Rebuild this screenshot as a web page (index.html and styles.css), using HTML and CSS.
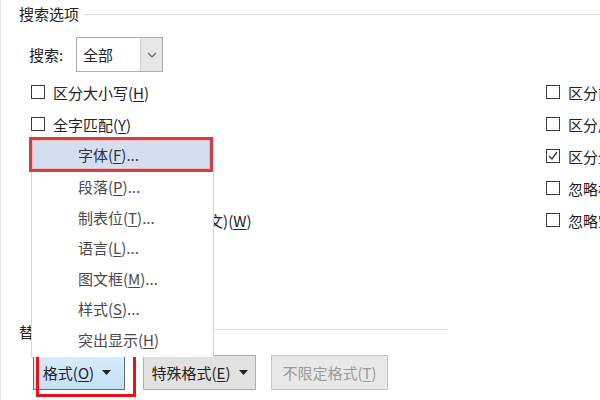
FILE: index.html
```html
<!DOCTYPE html>
<html lang="zh-CN">
<head>
  <meta charset="UTF-8" />
  <title>查找和替换</title>
  <link rel="stylesheet" href="styles.css">
</head>
<body>
  <div class="dialog">
    <div class="group-title">
      <span>搜索选项</span>
      <i class="rule"></i>
    </div>

    <div class="search-row">
      <span class="label">搜索:</span>
      <div class="select">
        <span class="value">全部</span>
        <span class="arrow">
          <svg width="10" height="6" viewBox="0 0 10 6"><path d="M1 1 L5 5 L9 1" fill="none" stroke="#666" stroke-width="1.2"/></svg>
        </span>
      </div>
    </div>

    <div class="options">
      <ul class="col">
        <li><i class="box"></i><span>区分大小写(<u>H</u>)</span></li>
        <li><i class="box"></i><span>全字匹配(<u>Y</u>)</span></li>
        <!-- these two sit fully under the open menu -->
        <li class="covered"><i class="box"></i><span>使用通配符(<u>U</u>)</span></li>
        <li class="covered"><i class="box"></i><span>同音(英文)(<u>K</u>)</span></li>
        <li><i class="box"></i><span>查找单词的所有形式(英文)(<u>W</u>)</span></li>
      </ul>
      <ul class="col">
        <li><i class="box"></i><span>区分前缀(<u>X</u>)</span></li>
        <li><i class="box"></i><span>区分后缀(<u>T</u>)</span></li>
        <li><i class="box"><svg width="12" height="12" viewBox="0 0 12 12"><path d="M2 6 L5 9 L10 2" fill="none" stroke="#333" stroke-width="1.3"/></svg></i><span>区分全/半角(<u>M</u>)</span></li>
        <li><i class="box"></i><span>忽略标点符号(<u>S</u>)</span></li>
        <li><i class="box"></i><span>忽略空格(<u>W</u>)</span></li>
      </ul>
    </div>

    <div class="group-title replace">
      <span>替换</span>
      <i class="rule"></i>
    </div>

    <div class="buttons">
      <button class="btn active"><span>格式(<u>O</u>)</span><svg class="caret" width="9" height="5" viewBox="0 0 9 5"><path d="M0 0 H9 L4.5 5 Z" fill="#222"/></svg></button>
      <button class="btn wide"><span>特殊格式(<u>E</u>)</span><svg class="caret" width="9" height="5" viewBox="0 0 9 5"><path d="M0 0 H9 L4.5 5 Z" fill="#222"/></svg></button>
      <button class="btn disabled"><span>不限定格式(<u>T</u>)</span></button>
      <span class="mark-button"></span>
    </div>

    <ul class="menu">
      <li class="selected">字体(<u>F</u>)...</li>
      <li>段落(<u>P</u>)...</li>
      <li>制表位(<u>T</u>)...</li>
      <li>语言(<u>L</u>)...</li>
      <li>图文框(<u>M</u>)...</li>
      <li>样式(<u>S</u>)...</li>
      <li>突出显示(<u>H</u>)</li>
    </ul>
  </div>
</body>
</html>
```

FILE: styles.css
```css
body {
  margin: 0;
  background: #fff;
  font-family: "Noto Sans CJK SC", "Microsoft YaHei", sans-serif;
  font-size: 15px;
  color: #222;
  overflow: hidden;
}
.dialog {
  position: relative;
  width: 600px;
  height: 400px;
  box-sizing: border-box;
  padding: 4px 0 0 18px;
  border-left: 1px solid #e4e4e4;
  white-space: nowrap;
  overflow: hidden;
}
u {
  text-decoration: underline;
  text-underline-offset: 2px;
}
.group-title {
  display: flex;
  align-items: center;
  height: 20px;
  line-height: 20px;
}
.group-title .rule {
  flex: 1;
  height: 1px;
  background: #dcdcdc;
  margin-left: 6px;
  margin-top: 1px;
}
.search-row {
  display: flex;
  align-items: center;
  margin-top: 13px;
  padding-left: 10px;
}
.search-row .label {
  width: 47px;
}
.select {
  display: flex;
  width: 87px;
  height: 35px;
  box-sizing: border-box;
  border: 1px solid #acacac;
}
.select .value {
  flex: 1;
  padding-left: 6px;
  line-height: 33px;
}
.select .arrow {
  width: 21px;
  background: #e6e6e6;
  border-left: 1px solid #cfcfcf;
  display: flex;
  align-items: center;
  justify-content: center;
}
.options {
  display: grid;
  grid-template-columns: 515px auto;
  padding-left: 12px;
  margin-top: 4px;
}
.col {
  list-style: none;
  margin: 0;
  padding: 0;
}
.col li {
  display: flex;
  align-items: center;
  height: 32px;
}
.col li.covered {
  visibility: hidden;
}
.box {
  flex: none;
  width: 14px;
  height: 14px;
  border: 1px solid #3a3a3a;
  box-sizing: border-box;
  margin-right: 8px;
  display: flex;
  align-items: center;
  justify-content: center;
}
.box svg {
  flex: none;
}
.replace {
  margin-top: 86px;
}
.replace .rule {
  flex: none;
  width: 397px;
  margin-left: 2px;
  margin-top: -6px;
}
.buttons {
  display: flex;
  margin-top: 13px;
  margin-left: 14px;
  gap: 18px;
}
.btn {
  height: 35px;
  font: inherit;
  color: #222;
  background: #e1e1e1;
  border: 1px solid #adadad;
  padding: 0;
  display: flex;
  align-items: center;
  justify-content: center;
  gap: 8px;
}
.btn.active {
  width: 92px;
  padding-right: 4px;
  background: linear-gradient(#d8ebf9, #c4e0f5);
  border-color: #55707f;
}
.btn.wide {
  width: 113px;
}
.btn.disabled {
  width: 117px;
  margin-left: -3px;
  color: #9a9a9a;
  background: #e8e8e8;
  border-color: #c2c2c2;
}
.mark-button {
  position: absolute;
  left: 35px;
  top: 348px;
  width: 100px;
  height: 49px;
  box-sizing: border-box;
  border: 3px solid #e8131b;
}
.menu {
  position: absolute;
  left: 30px;
  top: 135px;
  width: 183px;
  height: 222px;
  box-sizing: border-box;
  margin: 0;
  padding: 2px 0 0 0;
  list-style: none;
  background: #fff;
  border-left: 1px solid #d6d6d6;
  border-right: 1px solid #d6d6d6;
  color: #4a4a4a;
}
.menu li {
  height: 30.5px;
  line-height: 30.5px;
  padding-left: 46px;
}
.menu li.selected {
  height: 35px;
  line-height: 29px;
  margin-left: -3px;
  padding-left: 46px;
  box-sizing: border-box;
  background: #d3dff1;
  border: 3px solid #c8424c;
  box-shadow: inset 0 0 0 1px #f2b7b7;
  color: #333;
}
```
